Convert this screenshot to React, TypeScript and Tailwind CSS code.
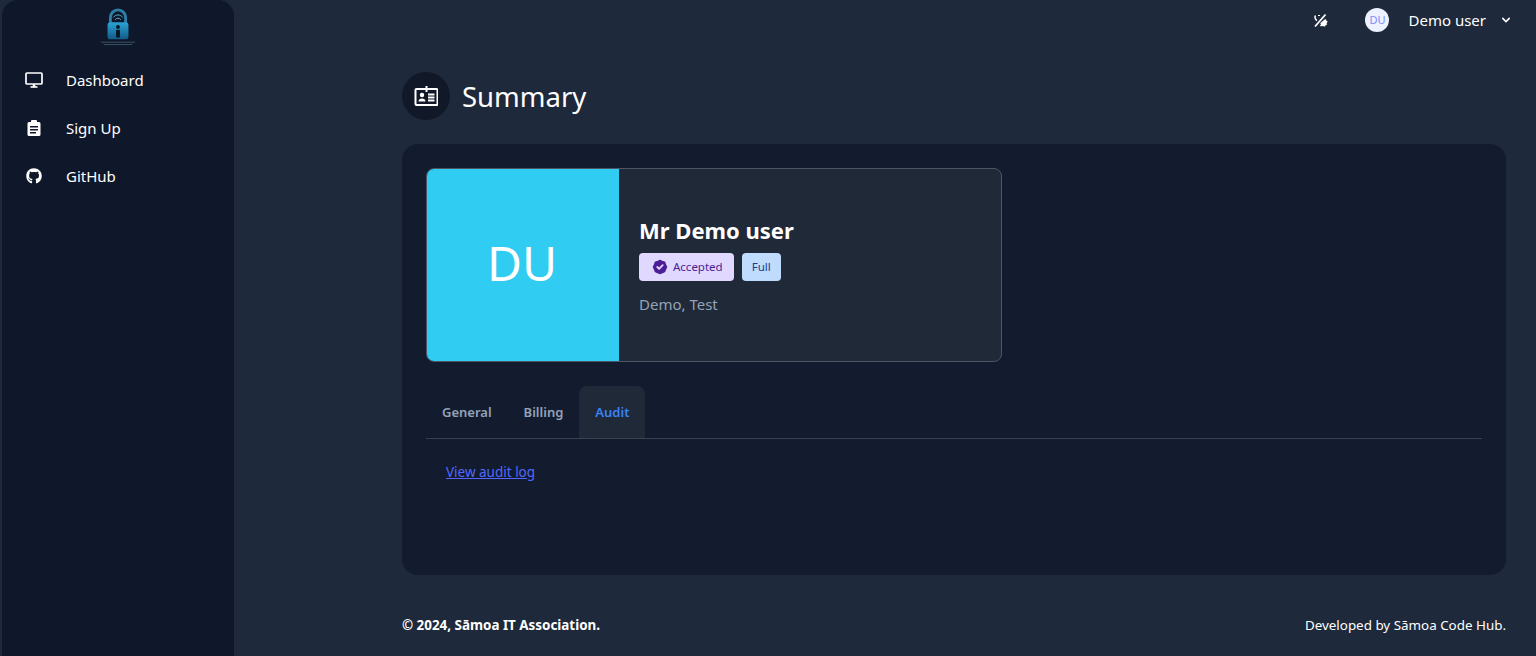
import { FaGithub } from "react-icons/fa";
import { HiBadgeCheck, HiChevronDown } from "react-icons/hi";

const DesktopIcon = () => (
  <svg viewBox="0 0 20 20" className="h-5 w-5" fill="none" stroke="currentColor">
    <rect x="2" y="3" width="16" height="11" rx="1" strokeWidth="1.7" />
    <path d="M6.5 17h7" strokeWidth="1.6" />
    <path d="M9 14.5h2V17H9z" fill="currentColor" strokeWidth="0.5" />
  </svg>
);

const ClipboardIcon = () => (
  <svg viewBox="0 0 20 20" className="h-5 w-5" fill="currentColor">
    <path
      fillRule="evenodd"
      d="M8 2h4a1 1 0 0 1 1 1v1h2a1.500 1.500 0 0 1 1.500 1.500v11A1.500 1.500 0 0 1 15 18H5a1.500 1.500 0 0 1-1.500-1.500v-11A1.500 1.500 0 0 1 5 4h2V3a1 1 0 0 1 1-1zM6 8v1.400h8V8zm0 3v1.400h8V11zm0 3v1.400h6V14z"
    />
  </svg>
);

const IdCardIcon = () => (
  <svg viewBox="0 0 24 24" className="h-6 w-6" fill="none" stroke="currentColor">
    <rect x="1.5" y="5" width="22" height="16" rx="1" strokeWidth="2" />
    <path d="M12.5 2v6" strokeWidth="2" />
    <circle cx="8" cy="11" r="2.200" fill="currentColor" stroke="none" />
    <path d="M4.500 17.500c0-2 1.500-3 3.500-3s3.500 1 3.500 3z" fill="currentColor" stroke="none" />
    <path d="M14 10.500h6.500M14 13.500h6.500M14 16.500h6.500" strokeWidth="1.800" />
  </svg>
);

const SunOffIcon = () => (
  <svg viewBox="0 0 16 16" className="h-4 w-4" fill="none" stroke="currentColor" strokeWidth="1.8">
    <path d="M3 14.500L13.500 2.500" />
    <path d="M3.500 3.500a3.500 3.500 0 0 0 1.500 5" strokeWidth="1.500" />
    <path d="M6 3.500h2" strokeWidth="1.200" />
    <path d="M8 14l1-1.500-.5-1.500 5-4 .5 1.500 1.500 1-1 1.500.5 1.500-1.500.5-.5 1.500-1.500-.5z" fill="currentColor" strokeWidth="0.3" />
  </svg>
);

const LogoIcon = () => (
  <svg viewBox="0 0 40 40" className="h-[38px] w-[38px]">
    <defs>
      <linearGradient id="lockFill" x1="0" y1="0" x2="0" y2="1">
        <stop offset="0" stopColor="#2aa3d4" />
        <stop offset="1" stopColor="#125a86" />
      </linearGradient>
    </defs>
    <path d="M12 16v-6a8 8 0 0 1 16 0v6" fill="none" stroke="#2d7fa8" strokeWidth="3" />
    <path d="M15 10a6 6 0 0 1 10 0" fill="none" stroke="#5fb3d6" strokeWidth="1" />
    <path d="M17 12.500a3.500 3.500 0 0 1 6 0" fill="none" stroke="#5fb3d6" strokeWidth="1" />
    <rect x="9" y="15" width="22" height="18" rx="3" fill="url(#lockFill)" />
    <circle cx="20" cy="20" r="2" fill="#07131f" />
    <path d="M18 23h4v8h-4z" fill="#07131f" />
    <path d="M2 36h36M5 38.500h30" stroke="#3d5568" strokeWidth="1" />
  </svg>
);

const navItems = [
  { label: "Dashboard", icon: <DesktopIcon /> },
  { label: "Sign Up", icon: <ClipboardIcon /> },
  { label: "GitHub", icon: <FaGithub className="h-4 w-4" /> },
];

const tabs = ["General", "Billing", "Audit"];

export default function App() {
  return (
    <div className="flex h-[656px] overflow-hidden bg-[#1e293b] font-['Noto_Sans',sans-serif] text-white">
      <aside className="ml-[2px] h-full w-[232px] shrink-0 rounded-t-2xl bg-[#0f172a]">
        <div className="flex h-[56px] justify-center pt-2">
          <LogoIcon />
        </div>
        <nav>
          {navItems.map((item) => (
            <div key={item.label} className="flex h-12 items-center">
              <span className="flex w-[64px] justify-center">{item.icon}</span>
              <span className="text-[15px]">{item.label}</span>
            </div>
          ))}
        </nav>
      </aside>

      <div className="flex min-w-0 flex-1 flex-col">
        <header className="flex h-10 items-center justify-end pr-[22px]">
          <SunOffIcon />
          <span className="ml-[37px] flex h-6 w-6 items-center justify-center rounded-full bg-[#eef2ff] text-[11px] text-[#818cf8]">
            DU
          </span>
          <span className="ml-[19px] text-[15px]">Demo user</span>
          <HiChevronDown className="ml-3 h-4 w-4" />
        </header>

        <main className="flex flex-1 flex-col pl-[168px] pr-[30px]">
          <div className="mt-8 flex items-center gap-3">
            <span className="flex h-12 w-12 items-center justify-center rounded-full bg-[#111827]">
              <IdCardIcon />
            </span>
            <h1 className="pt-[2px] text-[27.5px] leading-none">Summary</h1>
          </div>

          <section className="mt-6 h-[431px] rounded-2xl bg-[#131b2e] p-6">
            <div className="flex h-[194px] w-[576px] overflow-hidden rounded-lg border border-[#4b5563] bg-[#1f2937]">
              <div className="flex w-[192px] shrink-0 items-center justify-center bg-[#30ccf2] pb-1 pr-[2px] text-5xl">
                DU
              </div>
              <div className="flex flex-col pl-5 pt-[47px]">
                <h2 className="text-[22px] font-bold leading-7">Mr Demo user</h2>
                <div className="mt-[9px] flex gap-2 text-[11.5px]">
                  <span className="flex h-7 items-center gap-1 rounded bg-[#e0d8fe] pl-3 pr-[11px] text-[#4c1d95]">
                    <HiBadgeCheck className="h-[18px] w-[18px]" />
                    Accepted
                  </span>
                  <span className="flex h-7 items-center rounded bg-[#bfdbfe] px-[10px] text-[#1e3a8a]">Full</span>
                </div>
                <p className="mt-[13px] text-[15px] leading-[20px] text-[#94a3b8]">Demo, Test</p>
              </div>
            </div>

            <div className="mt-6 flex h-[53px] border-b border-[#374151] text-[13px] font-semibold">
              {tabs.map((tab) => (
                <button
                  key={tab}
                  className={
                    tab === "Audit"
                      ? "rounded-t-lg bg-[#1f2937] px-4 pt-[2px] text-[#3b82f6]"
                      : "rounded-t-lg px-4 pt-[2px] text-[#94a3b8]"
                  }
                >
                  {tab}
                </button>
              ))}
            </div>

            <div className="mt-[22px] pl-5 leading-5">
              <a href="#" className="text-[13.5px] text-[#5468ff] underline">
                View audit log
              </a>
            </div>
          </section>

          <footer className="mt-[40px] flex justify-between text-[13.4px]">
            <span className="font-bold">© 2024, Sāmoa IT Association.</span>
            <span>Developed by Sāmoa Code Hub.</span>
          </footer>
        </main>
      </div>
    </div>
  );
}
